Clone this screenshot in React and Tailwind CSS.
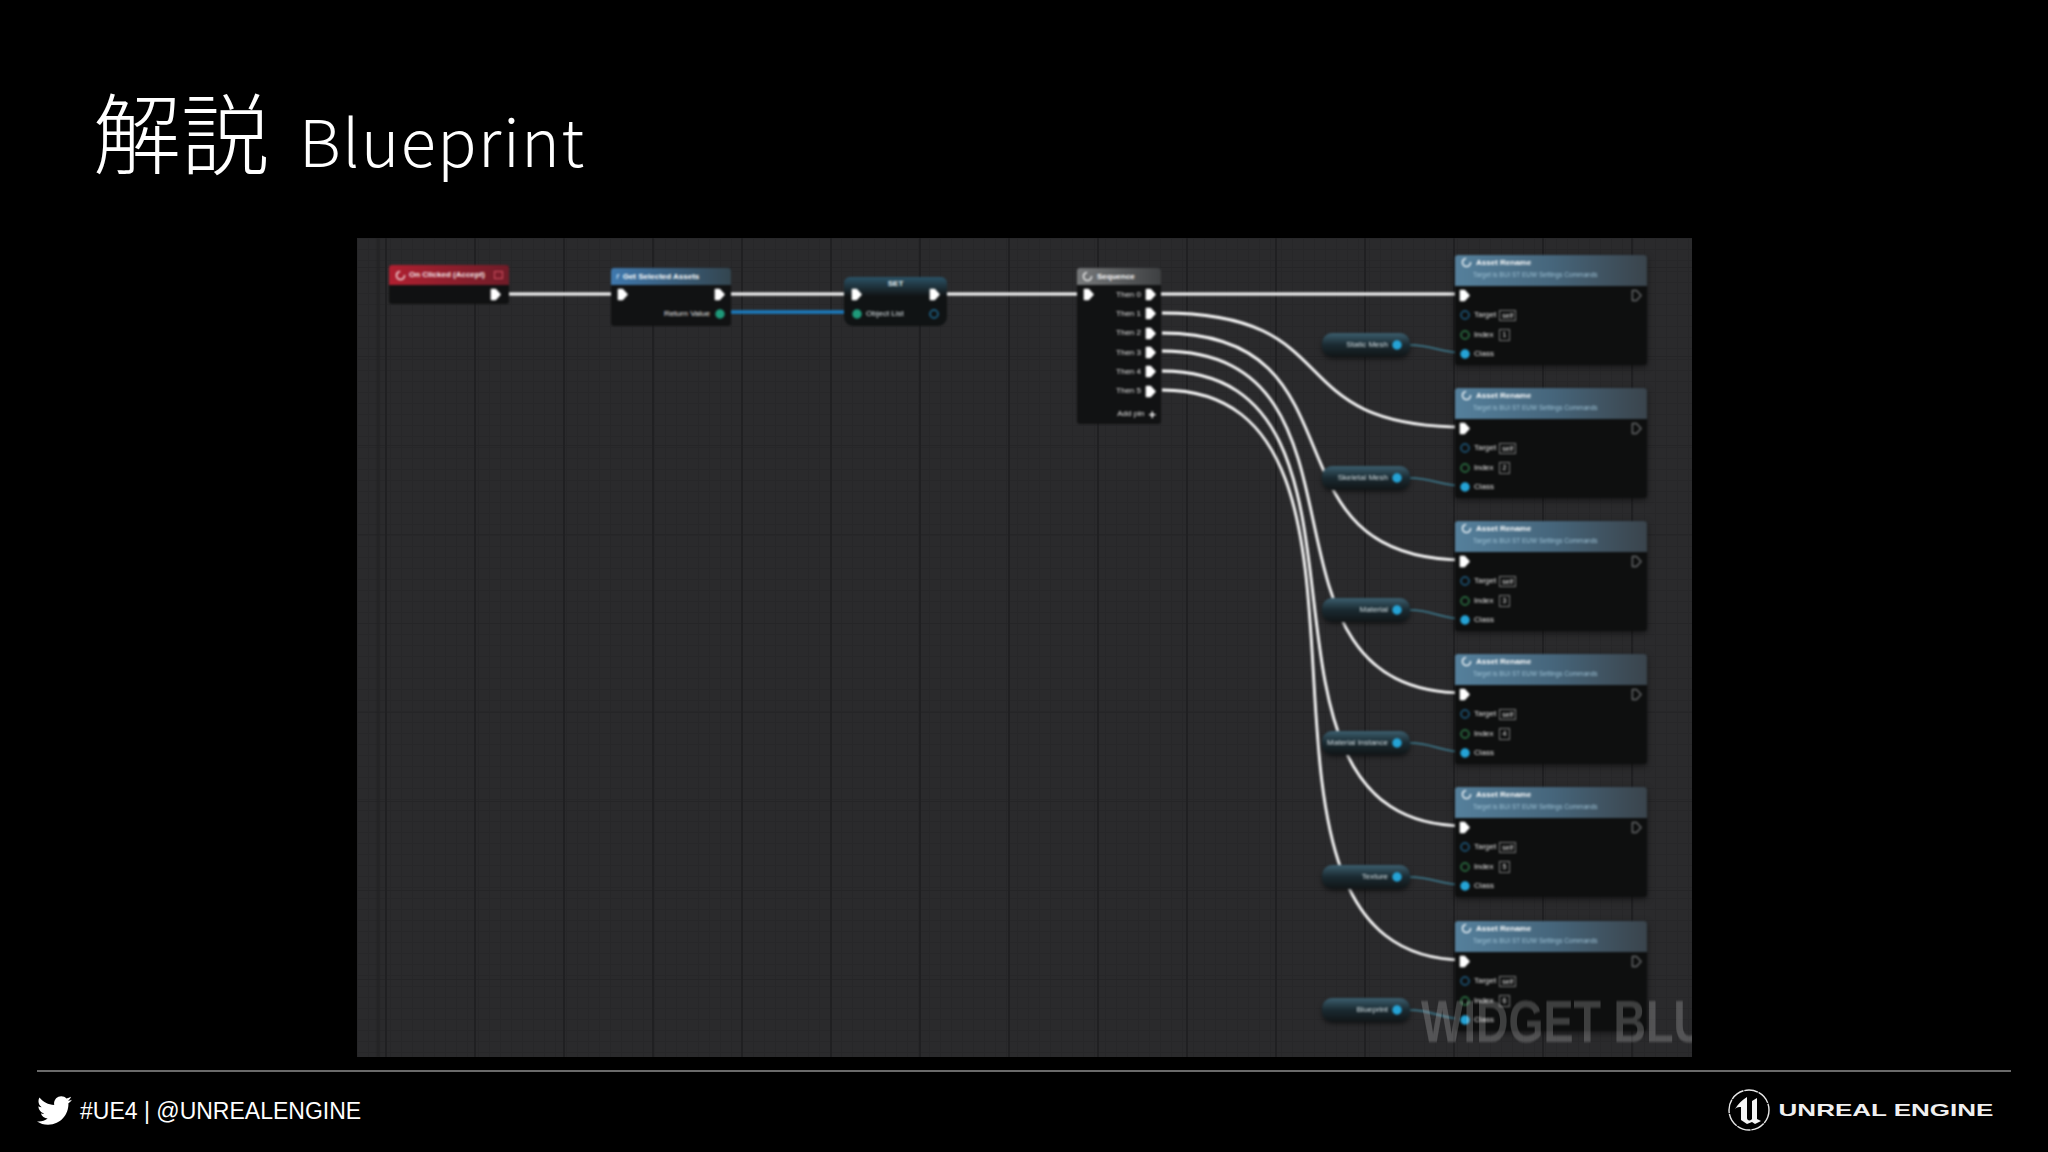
import React from 'react';
import { FaTwitter } from 'react-icons/fa';

const sans = 'font-["Liberation_Sans",Arial,sans-serif]';

const assetNodes = [
  { top: 'top-[17px]', index: 1 },
  { top: 'top-[150px]', index: 2 },
  { top: 'top-[283px]', index: 3 },
  { top: 'top-[416px]', index: 4 },
  { top: 'top-[549px]', index: 5 },
  { top: 'top-[683px]', index: 6 },
];

const pills = [
  { top: 'top-[95px]', label: 'Static Mesh' },
  { top: 'top-[228px]', label: 'Skeletal Mesh' },
  { top: 'top-[360px]', label: 'Material' },
  { top: 'top-[493px]', label: 'Material Instance' },
  { top: 'top-[627px]', label: 'Texture' },
  { top: 'top-[760px]', label: 'Blueprint' },
];

const seqWires = [
  'M805 75 C995 75 918 189 1108 189',
  'M805 95 C1015 95 898 322 1108 322',
  'M805 113 C1035 113 878 455 1108 455',
  'M805 133 C1055 133 858 588 1108 588',
  'M805 152 C1075 152 838 722 1108 722',
];

const classWires = [
  'M1053 107 C1075 107 1085 115 1108 115',
  'M1053 240 C1075 240 1085 248 1108 248',
  'M1053 372 C1075 372 1085 381 1108 381',
  'M1053 505 C1075 505 1085 514 1108 514',
  'M1053 639 C1075 639 1085 647 1108 647',
  'M1053 772 C1075 772 1085 781 1108 781',
];

function ExecPin({ outline }) {
  return (
    <svg width="11" height="13" viewBox="0 0 12 14" className="shrink-0">
      <path
        d="M1.5 1.5 H6 L11 7 L6 12.5 H1.5 Z"
        fill={outline ? 'none' : '#ffffff'}
        stroke={outline ? '#66686a' : '#ffffff'}
        strokeWidth="1.5"
        strokeLinejoin="round"
      />
    </svg>
  );
}

function DataPin({ color, filled }) {
  return (
    <svg width="12" height="12" viewBox="0 0 12 12" className="shrink-0">
      <circle cx="6" cy="6" r="4" fill={filled ? color : 'none'} stroke={color} strokeWidth="1.5" />
    </svg>
  );
}

function NodeGlyph({ color }) {
  return (
    <svg width="11" height="11" viewBox="0 0 11 11" className="shrink-0">
      <circle cx="5.5" cy="5.5" r="4" fill="none" stroke={color} strokeWidth="1.6" strokeDasharray="18 6" />
    </svg>
  );
}

function AssetNode({ top, index }) {
  return (
    <div className={`absolute left-[1098px] ${top} w-[192px] h-[110px] bg-[#0e0f0f] rounded-[3px] shadow-[0_2px_6px_rgba(0,0,0,0.5)]`}>
      <div className="h-[31px] rounded-t-[3px] bg-gradient-to-r from-[#55809c] via-[#46667c] to-[#3a444c] pl-[6px]">
        <div className="flex items-center gap-[4px] h-[15px] text-[8px] font-bold text-white">
          <NodeGlyph color="#e8f0f5" />
          <span>Asset Rename</span>
        </div>
        <div className="pl-[12px] text-[6.5px] leading-[10px] text-[#9cc0d4] whitespace-nowrap">Target is BUI ST EUW Settings Commands</div>
      </div>
      <div className="flex items-center justify-between h-[18px] pl-[4px] pr-[5px] mb-[1px]">
        <ExecPin />
        <ExecPin outline />
      </div>
      <div className="flex items-center gap-[3px] h-[20px] pl-[4px] text-[8px] text-[#e4e4e4]">
        <DataPin color="#1f5f86" />
        <span>Target</span>
        <span className="border border-[#777] px-[2px] leading-[9px] text-[7px]">self</span>
      </div>
      <div className="flex items-center gap-[3px] h-[19px] pl-[4px] text-[8px] text-[#e4e4e4]">
        <DataPin color="#2f7d4a" />
        <span>Index</span>
        <span className="border border-[#777] px-[3px] leading-[10px] text-[7px] ml-[2px]">{index}</span>
      </div>
      <div className="flex items-center gap-[3px] h-[20px] pl-[4px] text-[8px] text-[#e4e4e4]">
        <DataPin color="#25a3d6" filled />
        <span>Class</span>
      </div>
    </div>
  );
}

function Pill({ top, label }) {
  return (
    <div className={`absolute left-[965px] ${top} w-[88px] h-[24px] flex items-center justify-end gap-[3px] pr-[7px] rounded-[10px] bg-gradient-to-b from-[#3d5f6f] via-[#1a2a31] to-[#111517] shadow-[0_2px_4px_rgba(0,0,0,0.5)] text-[8px] text-[#d5e0e5] whitespace-nowrap`}>
      <span>{label}</span>
      <DataPin color="#25a3d6" filled />
    </div>
  );
}

function BlueprintCanvas() {
  return (
    <div className="relative ml-[357px] w-[1335px] h-[819px] overflow-hidden bg-[#2a2a2c] bg-[linear-gradient(to_right,#202022_2px,transparent_2px),linear-gradient(to_bottom,#252527_1px,transparent_1px),linear-gradient(to_right,#272729_1px,transparent_1px),linear-gradient(to_bottom,#272729_1px,transparent_1px)] bg-size-[89px_89px,89px_89px,11px_11px,11px_11px] bg-position-[28px_29px,28px_29px,0_0,0_0]">
      <div className="absolute inset-0 blur-[0.9px] font-['Liberation_Sans',Arial,sans-serif]">
        <div className="absolute left-[20px] top-0 bottom-0 w-[2px] bg-[#202022]" />

        <svg width="1335" height="819" viewBox="0 0 1335 819" className="absolute left-0 top-0" fill="none">
          <g stroke="#ffffff" strokeWidth="2.8">
            <path d="M144 56 H266" />
            <path d="M369 56 H500" />
            <path d="M583 56 H731" />
            <path d="M800 56 H1108" />
            {seqWires.map((d) => (
              <path key={d} d={d} />
            ))}
          </g>
          <path d="M370 74 H500" stroke="#1b7cc0" strokeWidth="3.5" />
          <g stroke="#3f8399" strokeWidth="1.6">
            {classWires.map((d) => (
              <path key={d} d={d} />
            ))}
          </g>
        </svg>

        {/* on clicked event */}
        <div className="absolute left-[32px] top-[27px] w-[120px] h-[39px] bg-[#101112] rounded-[3px]">
          <div className="flex items-center gap-[3px] h-[20px] px-[6px] rounded-t-[3px] bg-gradient-to-r from-[#b01f30] to-[#6f1c28] text-[8px] font-bold text-[#f8ecee] whitespace-nowrap">
            <NodeGlyph color="#f3d9dc" />
            <span>On Clicked (Accept)</span>
            <span className="ml-auto w-[9px] h-[8px] border border-[#d05060] bg-[#7a1c2a]" />
          </div>
          <div className="flex justify-end items-center h-[19px] pr-[8px]">
            <ExecPin />
          </div>
        </div>

        {/* get selected assets */}
        <div className="absolute left-[254px] top-[30px] w-[120px] h-[58px] bg-[#111213] rounded-[3px]">
          <div className="flex items-center gap-[4px] h-[17px] px-[5px] rounded-t-[3px] bg-gradient-to-r from-[#3f78ad] to-[#33454f] text-[8px] font-bold text-white whitespace-nowrap">
            <span className="italic text-[#bcd8f0]">f</span>
            <span>Get Selected Assets</span>
          </div>
          <div className="flex justify-between items-center h-[19px] px-[6px]">
            <ExecPin />
            <ExecPin />
          </div>
          <div className="flex justify-end items-center gap-[4px] h-[19px] pr-[5px] text-[8px] text-[#e4e4e4]">
            <span>Return Value</span>
            <DataPin color="#1f9a7a" filled />
          </div>
        </div>

        {/* set */}
        <div className="absolute left-[487px] top-[39px] w-[103px] h-[49px] bg-gradient-to-b from-[#2b5468] via-[#101314] via-40% to-[#101314] rounded-t-[6px] rounded-b-[9px]">
          <div className="h-[8px] pt-[2px] text-center text-[8px] leading-[10px] font-bold text-[#e8f2f6]">SET</div>
          <div className="flex justify-between items-center h-[19px] px-[7px]">
            <ExecPin />
            <ExecPin />
          </div>
          <div className="flex items-center gap-[3px] h-[19px] px-[7px] text-[8px] text-[#e0e8ec]">
            <DataPin color="#1f9a7a" filled />
            <span>Object List</span>
            <span className="ml-auto">
              <DataPin color="#1f6f9a" />
            </span>
          </div>
        </div>

        {/* sequence */}
        <div className="absolute left-[720px] top-[30px] w-[84px] h-[156px] bg-[#111213] rounded-[3px]">
          <div className="flex items-center gap-[4px] h-[17px] px-[5px] rounded-t-[3px] bg-gradient-to-r from-[#77797b] to-[#3e4042] text-[8px] font-bold text-white">
            <NodeGlyph color="#e8e8e8" />
            <span>Sequence</span>
          </div>
          <div className="relative">
            <div className="absolute left-[6px] top-[3px]">
              <ExecPin />
            </div>
            {[0, 1, 2, 3, 4, 5].map((n) => (
              <div key={n} className="flex justify-end items-center gap-[4px] h-[19.3px] pr-[5px] text-[8px] text-[#e4e4e4]">
                <span>Then {n}</span>
                <ExecPin />
              </div>
            ))}
            <div className="flex justify-end items-center gap-[4px] h-[19px] mt-[4px] pr-[5px] text-[8px] text-[#e4e4e4]">
              <span>Add pin</span>
              <span className="text-[13px] leading-none font-bold text-white">+</span>
            </div>
          </div>
        </div>

        {assetNodes.map((n) => (
          <AssetNode key={n.top} top={n.top} index={n.index} />
        ))}
        {pills.map((p) => (
          <Pill key={p.top} top={p.top} label={p.label} />
        ))}
      </div>

      <div className="absolute left-[1064px] top-[754px] origin-left scale-x-[0.75] blur-[1px] whitespace-nowrap font-['Liberation_Sans',sans-serif] font-bold text-[60px] leading-[60px] text-white/20">
        WIDGET BLUEPRINT
      </div>
    </div>
  );
}

function UnrealLogo() {
  return (
    <div className="flex items-center">
      <svg width="44" height="44" viewBox="0 0 44 44" className="shrink-0">
        <circle cx="22" cy="22" r="20" fill="none" stroke="#e8e8e8" strokeWidth="1.4" strokeDasharray="14 0.8" />
        <path
          fillRule="evenodd"
          fill="#f5f5f5"
          d="M8 21 C11 16 15 12 20 9 L20 30 C20 32 22 33 24 32 L25 31 L25 13 L30 10 L30 31 L34 33 L28 36 L25 34 L20 36 L14 32 L14 19 C12 19 10 19 8 21Z"
        />
      </svg>
      <div className={`${sans} ml-[82px] origin-right scale-x-[1.53] text-[17px] leading-none font-bold text-[#f0f0f0] whitespace-nowrap`}>
        UNREAL ENGINE
      </div>
    </div>
  );
}

export default function App() {
  return (
    <div className="flex flex-col w-[2048px] h-[1152px] overflow-hidden bg-black">
      <header className="h-[238px] pl-[93px] pt-[85px] text-white font-['Noto_Sans_CJK_JP','Noto_Sans',sans-serif] font-light leading-none whitespace-nowrap">
        <span className="text-[88px]">解説</span>
        <span className="text-[65px] ml-[30px] tracking-[1.5px]">Blueprint</span>
      </header>

      <BlueprintCanvas />

      <footer className="mt-[13px] mx-[37px] h-[78px] pr-[18px] border-t-2 border-[#6a6a6a] flex items-center justify-between">
        <div className={`${sans} flex items-center text-white text-[23px]`}>
          <FaTwitter className="text-[35px] mr-[8px]" />
          <span className="pt-[3px]">#UE4 | @UNREALENGINE</span>
        </div>
        <UnrealLogo />
      </footer>
    </div>
  );
}
